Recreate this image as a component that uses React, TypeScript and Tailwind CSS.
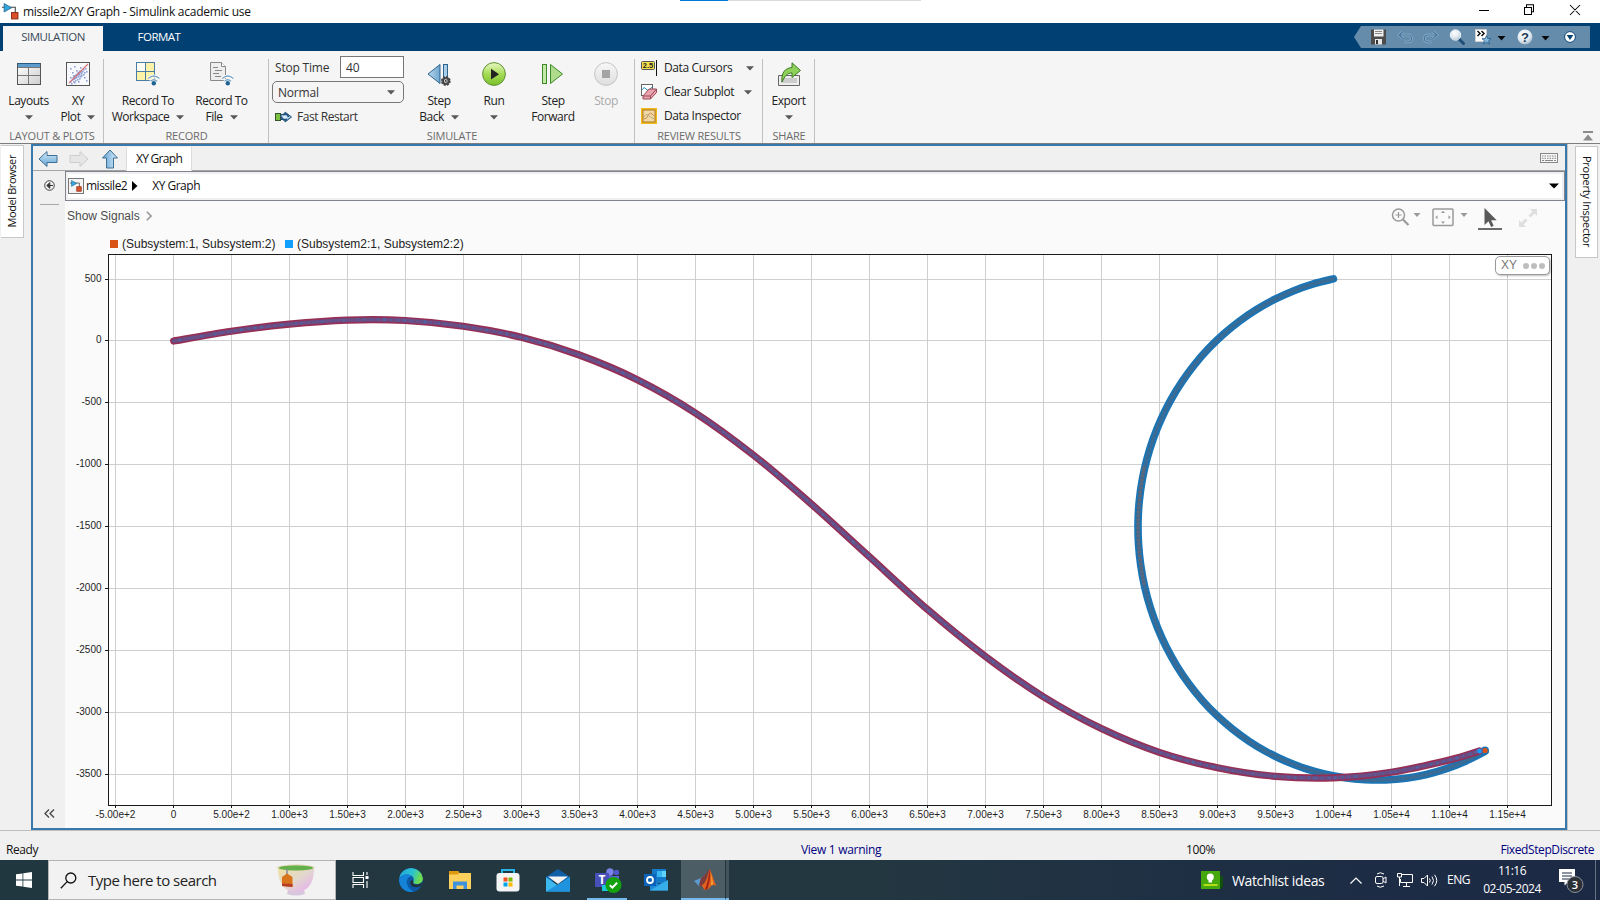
import React from "react";

const SEG = "font-['Open_Sans','Noto_Sans',sans-serif]";

type Pt = [number, number];

const pursuer: Pt[] = [
  [173.7, 341], [231.3, 331.3], [289.3, 324.2], [347.3, 320.1], [405.3, 320.5], [463.3, 326.3], [521.3, 337.3], [579.3, 355],
  [637.3, 379.7], [695.3, 412.9], [753.3, 455], [811.3, 504], [869.3, 556.7], [927.3, 609.3], [985.3, 656.3], [1043.3, 696.7],
  [1101.3, 728.5], [1159.3, 752.3], [1217.3, 767.7], [1275.3, 776.3], [1333.3, 777.8], [1391.3, 772.2], [1449.3, 760], [1479.3, 751],
];

const target: Pt[] = Array.from({ length: 41 }, (_, i) => {
  const deg = -78.8 + (i / 40) * (115.5 + 78.8);
  const t = (deg * Math.PI) / 180;
  const bump = deg > 90 ? -6.5 * Math.sin(2 * t) ** 2 : deg > 0 ? 1.8 * Math.sin(2 * t) : 0;
  return [1380.5 - 242.5 * Math.cos(t), 527 + 253 * Math.sin(t) + bump];
});

function smooth(p: Pt[]) {
  let d = `M${p[0][0].toFixed(2)} ${p[0][1].toFixed(2)}`;
  for (let i = 0; i < p.length - 1; i++) {
    const a = p[Math.max(0, i - 1)], b = p[i], c = p[i + 1], e = p[Math.min(p.length - 1, i + 2)];
    d += `C${(b[0] + (c[0] - a[0]) / 6).toFixed(2)} ${(b[1] + (c[1] - a[1]) / 6).toFixed(2)} ${(c[0] - (e[0] - b[0]) / 6).toFixed(2)} ${(c[1] - (e[1] - b[1]) / 6).toFixed(2)} ${c[0].toFixed(2)} ${c[1].toFixed(2)}`;
  }
  return d;
}

const xLabels = ["-5.00e+2", "0", "5.00e+2", "1.00e+3", "1.50e+3", "2.00e+3", "2.50e+3", "3.00e+3", "3.50e+3", "4.00e+3", "4.50e+3", "5.00e+3", "5.50e+3", "6.00e+3", "6.50e+3", "7.00e+3", "7.50e+3", "8.00e+3", "8.50e+3", "9.00e+3", "9.50e+3", "1.00e+4", "1.05e+4", "1.10e+4", "1.15e+4"];
const yTicks: [string, number][] = [["500", 279], ["0", 340], ["-500", 402], ["-1000", 464], ["-1500", 526], ["-2000", 588], ["-2500", 650], ["-3000", 712], ["-3500", 774]];

function Chart() {
  const a = smooth(pursuer);
  const b = smooth(target);
  return (
    <svg width="1500" height="575" viewBox="65 253 1500 575" className="block" fontFamily="'Liberation Sans', sans-serif" fontSize="10">
      <rect x="108" y="254" width="1444" height="552" fill="#fff" />
      {xLabels.map((l, i) => (
        <g key={l}>
          <rect x={115 + 58 * i} y="255" width="1" height="550" fill="#cfcfcf" />
          <rect x={115 + 58 * i} y="806" width="1" height="2" fill="#1a1a1a" />
          <text x={115.5 + 58 * i} y="818" textAnchor="middle" fill="#1f1f1f">{l}</text>
        </g>
      ))}
      {yTicks.map(([l, y]) => (
        <g key={l}>
          <rect x="109" y={y} width="1442" height="1" fill="#cfcfcf" />
          <rect x="105" y={y} width="3" height="1" fill="#1a1a1a" />
          <text x="101.5" y={y + 3} textAnchor="end" fill="#1f1f1f">{l}</text>
        </g>
      ))}
      <rect x="108.5" y="254.5" width="1443" height="551" fill="none" stroke="#1a1a1a" />
      <g fill="none" strokeLinecap="round" strokeLinejoin="round">
        <path d={b} stroke="#1b74b4" strokeWidth="7.6" />
        <path d={b} stroke="#3d6b92" strokeWidth="3.4" />
        <path d="M1144 467C1136 508 1136 545 1144 584" stroke="#626776" strokeWidth="3.2" />
        <path d={b} stroke="#2f6c9f" strokeWidth="3.6" strokeDasharray="1 3" strokeLinecap="butt" />
        <path d={a} stroke="#962f55" strokeWidth="7.2" />
        <path d={a} stroke="#665089" strokeWidth="3.8" />
        <path d={a} stroke="#4f64a4" strokeWidth="2.4" strokeDasharray="1.5 4 3 5 1 6" strokeLinecap="butt" />
        <path d={a} stroke="#7b4473" strokeWidth="4.4" strokeDasharray="1 7 1 4" strokeLinecap="butt" />
      </g>
      <circle cx="1485" cy="750.5" r="3.3" fill="#d95319" stroke="#1b74b4" strokeWidth="1.4" />
      <circle cx="1479.5" cy="751" r="2.8" fill="#139fff" stroke="#7a4c86" strokeWidth="1" />
    </svg>
  );
}

function Caret({ className = "", color = "#595959" }: { className?: string; color?: string }) {
  return (
    <svg width="8" height="5" viewBox="0 0 8 5" className={`shrink-0 ${className}`}>
      <path d="M0 .3h8L4 4.6z" fill={color} />
    </svg>
  );
}

function ModelIcon({ size }: { size: number }) {
  return (
    <svg width={size} height={size} viewBox="0 0 16 16" className="shrink-0">
      <path d="M0 4h12.500v6" fill="none" stroke="#444" strokeWidth="1" />
      <path d="M2 .5v8l7-4z" fill="#35a7dc" stroke="#1c5f86" strokeWidth=".7" />
      <rect x="9" y="9" width="6" height="6" fill="#d9502a" stroke="#8a2a10" strokeWidth=".9" />
    </svg>
  );
}

function Wifi() {
  return (
    <g>
      <path d="M12 16.5q6-5 11.500 0M14.500 19.300q3.300-3 6.600 0" fill="none" stroke="#fff" strokeWidth="3" />
      <path d="M12.200 16.500q5.600-5 11.200 0M14.500 19.300q3.300-3 6.600 0" fill="none" stroke="#7ba4c4" strokeWidth="1.300" />
      <circle cx="17.800" cy="21.300" r="2.200" fill="#1f6395" />
    </g>
  );
}

const icons = {
  layouts: (
    <svg width="24" height="24" viewBox="0 0 24 24">
      <defs><linearGradient id="lg1" x2="1" y2="1"><stop offset="0" stopColor="#fff" /><stop offset="1" stopColor="#cfcfcf" /></linearGradient></defs>
      <rect x=".5" y="1.500" width="23" height="21" fill="url(#lg1)" stroke="#555" />
      <rect x="1" y="2" width="22" height="3" fill="#5c9ccc" /><rect x=".5" y="1" width="23" height="1" fill="#275a82" />
      <path d="M1 5.500h22M1 13.500h22M11.500 5v17" stroke="#777" fill="none" />
    </svg>
  ),
  xy: (
    <svg width="24" height="24" viewBox="0 0 24 24">
      <rect x=".5" y=".5" width="23" height="23" fill="#f8f9fc" stroke="#555" />
      <g fill="#8fa3d6">
        {[[4, 19], [6, 17], [5, 21], [8, 16], [7, 19], [9, 18], [10, 15], [9, 13], [11, 17], [12, 14], [11, 12], [13, 12], [14, 14], [12, 10], [15, 11], [14, 9], [16, 9], [17, 7], [15, 13], [18, 10], [17, 12], [19, 6], [7, 13], [4, 15], [12, 19], [6, 10], [10, 8], [18, 15], [4, 6], [8, 4], [14, 5], [20, 18], [20, 9], [13, 16], [8, 20]].map(([x, y], i) => (
          <rect key={i} x={x} y={y} width="1.600" height="1.600" />
        ))}
      </g>
      <path d="M7 17l8-8" stroke="#6f88cc" strokeWidth="3" opacity=".6" />
      <path d="M3 21L22 2" stroke="#d9757a" strokeWidth="1.300" />
    </svg>
  ),
  recWs: (
    <svg width="24" height="24" viewBox="0 0 24 24">
      <rect x=".5" y=".5" width="18" height="18" fill="#fdf3a8" stroke="#4a7da6" />
      <rect x="1" y="1" width="8" height="8" fill="#fffef2" />
      <path d="M9.500 1v17M1 9.500h17" stroke="#4a7da6" />
      <Wifi />
    </svg>
  ),
  recFile: (
    <svg width="24" height="24" viewBox="0 0 24 24">
      <path d="M.5.500h11l4 4v14H.500z" fill="#eee" stroke="#888" />
      <path d="M11.500.500v4h4" fill="#fff" stroke="#888" />
      <path d="M3 5.500h5M5 8.500h7M3 11.500h6M5 14.500h6" stroke="#888" />
      <Wifi />
    </svg>
  ),
  stepBack: (
    <svg width="24" height="24" viewBox="0 0 24 24">
      <defs><linearGradient id="lb" x2="1"><stop offset="0" stopColor="#b9d8ee" /><stop offset="1" stopColor="#6fa6cd" /></linearGradient></defs>
      <path d="M13 2.500v19L1 12z" fill="url(#lb)" stroke="#2d6490" />
      <rect x="16.500" y="2.500" width="4" height="19" fill="#a9cde6" stroke="#2d6490" />
      <circle cx="18.800" cy="19" r="4.100" fill="#555" stroke="#444" strokeWidth="1.600" strokeDasharray="2 1.200" />
      <circle cx="18.800" cy="19" r="2.400" fill="#ddd" stroke="#333" /><circle cx="18.800" cy="19" r=".9" fill="#333" />
    </svg>
  ),
  run: (
    <svg width="24" height="24" viewBox="0 0 24 24">
      <defs><linearGradient id="gr" x2="0" y2="1"><stop offset="0" stopColor="#e8f7c4" /><stop offset=".5" stopColor="#a5dc55" /><stop offset="1" stopColor="#78c02c" /></linearGradient></defs>
      <circle cx="12" cy="12" r="11.400" fill="url(#gr)" stroke="#5f8f35" />
      <path d="M9 6.800v10.700l8-5.300z" fill="#222" />
    </svg>
  ),
  stepFwd: (
    <svg width="24" height="24" viewBox="0 0 24 24">
      <rect x="1.500" y="2.500" width="4" height="19" fill="#c3e8a8" stroke="#3e8a2a" />
      <path d="M9.500 2.500v19l12-9.500z" fill="#aedc8b" stroke="#3e8a2a" />
    </svg>
  ),
  stop: (
    <svg width="24" height="24" viewBox="0 0 24 24">
      <defs><linearGradient id="gs" x2="0" y2="1"><stop offset="0" stopColor="#f7f7f7" /><stop offset="1" stopColor="#dedede" /></linearGradient></defs>
      <circle cx="12" cy="12" r="11.400" fill="url(#gs)" stroke="#c4c4c4" />
      <rect x="8" y="8" width="8" height="8" fill="#a3a3a3" />
    </svg>
  ),
  exp: (
    <svg width="24" height="24" viewBox="0 0 24 24">
      <path d="M1.500 13.500h21v10h-21z" fill="#eee" stroke="#666" /><path d="M4 16h16v5H4z" fill="#ccc" />
      <path d="M5 20C4 11 8 6 15 5.500V.8l8.500 7.700L15 15.500v-4.500c-5 0-7 3-10 9z" fill="#8fd05a" stroke="#3b7a22" />
    </svg>
  ),
};

function Btn({ icon, l1, l2, caret, below, w, off }: { icon: React.ReactNode; l1: string; l2?: string; caret?: boolean; below?: boolean; w: string; off?: boolean }) {
  return (
    <div className={`flex flex-col items-center shrink-0 pt-[11px] ${w} ${off ? "text-[#ababab]" : "text-[#222]"}`}>
      {icon}
      <div className="mt-[7px] h-4 leading-4 whitespace-nowrap">{l1}</div>
      <div className="h-4 leading-4 whitespace-nowrap flex items-center justify-center gap-[7px]">
        {l2 && <span>{l2}</span>}
        {(caret || below) && <Caret />}
      </div>
    </div>
  );
}

function Section({ title, w, children }: { title: string; w: string; children: React.ReactNode }) {
  return (
    <div className={`flex flex-col shrink-0 relative h-[92px] ${w}`}>
      <div className="flex h-[76px]">{children}</div>
      <div className="h-4 leading-[17px] text-center text-[11px] tracking-[-0.2px] text-[#6b6b6b] whitespace-nowrap">{title}</div>
      <div className="absolute right-0 top-2 bottom-0 w-px bg-[#c0c0c0]" />
    </div>
  );
}

function NavArrow({ kind }: { kind: "left" | "right" | "up" }) {
  const off = kind === "right";
  const rot = kind === "up" ? "rotate-90" : kind === "right" ? "rotate-180" : "";
  return (
    <svg width="20" height="18" viewBox="0 0 20 18" className={rot}>
      <defs>
        <linearGradient id="na" x2="0" y2="1"><stop offset="0" stopColor="#d5ebfa" /><stop offset="1" stopColor="#62a3d4" /></linearGradient>
      </defs>
      <path d="M1 9l8-7.500v4h10v7H9v4z" fill={off ? "#e6e6e6" : "url(#na)"} stroke={off ? "#cdcdcd" : "#3f6f92"} />
    </svg>
  );
}

function Toolstrip() {
  return (
    <div className="flex h-[93px] bg-[#f5f5f5] border-b border-[#7d7d7d] text-[12px] tracking-[-0.45px] shrink-0">
      <Section title="LAYOUT & PLOTS" w="w-[104px]">
        <Btn icon={icons.layouts} l1="Layouts" below w="w-[57px]" />
        <Btn icon={icons.xy} l1="XY" l2="Plot" caret w="w-[42px]" />
      </Section>
      <Section title="RECORD" w="w-[165px]">
        <Btn icon={icons.recWs} l1="Record To" l2="Workspace" caret w="w-[88px]" />
        <Btn icon={icons.recFile} l1="Record To" l2="File" caret w="w-[59px]" />
      </Section>
      <Section title="SIMULATE" w="w-[366px]">
        <div className="w-[144px] pl-[3px] pt-[5px] flex flex-col text-[#333]">
          <div className="flex items-center justify-between w-[132px] pl-[3px] tracking-[-0.2px]">
            <span className="mt-[2px]">Stop Time</span>
            <div className="w-16 h-[22px] border border-[#777] bg-white pl-[5px] leading-[21px]">40</div>
          </div>
          <div className="mt-[3px] w-[132px] h-[22px] border border-[#777] rounded-[5px] flex items-center justify-between pl-[5px] pr-2 tracking-[-0.2px]">
            <span className="mt-px">Normal</span>
            <Caret />
          </div>
          <div className="mt-[6px] flex items-center gap-[5px] pl-[3px] h-4">
            <svg width="17" height="14" viewBox="0 0 17 14">
              <rect x=".5" y="3.500" width="5" height="7" fill="#7cc142" stroke="#35562a" />
              <path d="M6 4.500h4V2l6.500 5-6.500 5V9.500H6z" fill="#9cc4e2" stroke="#234f75" />
              <path d="M8 4.500a3.600 3.600 0 0 1 5.500 2.500M12 9.500a3.600 3.600 0 0 1-5.500-2.500" fill="none" stroke="#1d4c76" strokeWidth="1.500" /><path d="M8 7h4" stroke="#fff" strokeWidth="1.200" />
            </svg>
            <span>Fast Restart</span>
          </div>
        </div>
        <Btn icon={icons.stepBack} l1="Step" l2="Back" caret w="w-[52px]" />
        <Btn icon={icons.run} l1="Run" below w="w-[58px]" />
        <Btn icon={icons.stepFwd} l1="Step" l2="Forward" w="w-[60px]" />
        <Btn icon={icons.stop} l1="Stop" off w="w-[46px]" />
      </Section>
      <Section title="REVIEW RESULTS" w="w-[128px]">
        <div className="pl-[6px] pt-[5px] w-full text-[#222] tracking-[-0.38px]">
          <div className="h-6 flex items-center">
            <svg width="16" height="16" viewBox="0 0 16 16" className="mr-[7px]">
              <rect x=".5" y="1.500" width="13" height="8" rx="1" fill="#f3e04a" stroke="#555" />
              <text x="7" y="8.300" textAnchor="middle" fontSize="7.500" fontWeight="700" fontFamily="'Liberation Sans', sans-serif" fill="#222" letterSpacing="0">2.5</text>
              <rect x="15" y="0" width="1" height="16" fill="#111" />
            </svg>
            <span>Data Cursors</span>
            <Caret className="ml-auto mr-[9px]" />
          </div>
          <div className="h-6 flex items-center">
            <svg width="16" height="16" viewBox="0 0 16 16" className="mr-[7px]">
              <rect x=".5" y=".5" width="11" height="11" fill="#fff" stroke="#666" />
              <path d="M1 6q2-4 4-1t6-2" fill="none" stroke="#2e95d3" />
              <path d="M2 12l6-7h7.500v3.500l-6 6.500H2z" fill="#e8a5b0" stroke="#9b4a58" /><path d="M2 12h7.500l6-7M9.500 12v3" fill="none" stroke="#9b4a58" />
            </svg>
            <span>Clear Subplot</span>
            <Caret className="ml-auto mr-[11px]" />
          </div>
          <div className="h-6 flex items-center">
            <svg width="16" height="16" viewBox="0 0 16 16" className="mr-[7px]">
              <rect x="1" y="1" width="14" height="14" fill="#f0d9a4" stroke="#f2b91c" strokeWidth="2" />
              <rect x="2" y="2" width="12" height="12" fill="none" stroke="#a8772a" />
              <path d="M3 11q3 0 4.500-4t5.500 1" fill="none" stroke="#d08a55" /><path d="M3 9q2-4 4-2t6 4" fill="none" stroke="#b9ab88" />
            </svg>
            <span>Data Inspector</span>
          </div>
        </div>
      </Section>
      <Section title="SHARE" w="w-[52px]">
        <Btn icon={icons.exp} l1="Export" below w="w-[51px]" />
      </Section>
      <div className="ml-auto flex items-end pr-[7px] pb-[2px]">
        <svg width="10" height="10" viewBox="0 0 10 10"><path d="M0 0h10v2H0zM0 9.500h10L5 3.500z" fill="#8c8c8c" /></svg>
      </div>
    </div>
  );
}

function TabBar() {
  return (
    <div className="flex h-7 bg-[#004073] shrink-0 items-end text-[11.5px] tracking-[-0.5px]">
      <div className="ml-[3px] w-[100px] h-[25px] bg-[#f5f5f5] text-[#3a4a5a] flex items-center justify-center pb-[3px]">SIMULATION</div>
      <div className="w-[112px] h-[25px] text-white flex items-center justify-center pb-[3px]">FORMAT</div>
      <div className="ml-auto mr-[10px] mb-[3px]">
        <svg width="236" height="22" viewBox="1354 26 236 22" className="block">
          <defs><radialGradient id="ball" cx=".4" cy=".3" r=".8"><stop offset="0" stopColor="#fff" /><stop offset=".6" stopColor="#dde7ef" /><stop offset="1" stopColor="#8fa9bd" /></radialGradient></defs>
          <path d="M1354 37l7-11h229v22h-229z" fill="#668cac" />
          <path d="M1371 29.500h15v15h-15z" fill="#4c4c4c" /><path d="M1374 29.500h9.500v7H1374z" fill="#f1f1f1" /><path d="M1375 31.500h7M1375 33.500h7" stroke="#888" /><path d="M1375 39h7v5.500h-7z" fill="#e8e8e8" /><path d="M1376 40h2v4h-2z" fill="#333" />
          <g fill="none" stroke="#8fb2cf" strokeWidth="2.400"><path d="M1400 35h8q3.500 0 3.500 3.500T1408 42h-4M1403 31.500l-4 3.500 4 3.500" /><path d="M1436 35h-8q-3.500 0-3.500 3.500T1428 42h4M1433 31.500l4 3.500-4 3.500" /></g>
          <g fill="none" stroke="#48749a" strokeWidth="1.200"><path d="M1400 35h8q3.500 0 3.500 3.500T1408 42h-4M1403 31.500l-4 3.500 4 3.500" /><path d="M1436 35h-8q-3.500 0-3.500 3.500T1428 42h4M1433 31.500l4 3.500-4 3.500" /></g>
          <path d="M1458.500 38.500l5 5" stroke="#1f4c78" strokeWidth="3" strokeLinecap="round" /><circle cx="1455.500" cy="35" r="5.200" fill="url(#ball)" stroke="#e8f1f8" />
          <path d="M1475.500 29.500h11v12h-11z" fill="#fff" stroke="#d0d0d0" /><path d="M1477.500 31l2.500 2.500-2.500 2.500M1481.500 31l2.500 2.500-2.500 2.500" fill="none" stroke="#111" strokeWidth="1.500" />
          <path d="M1486.500 35.500l1.300 3 3.200.2-2.400 2.100.8 3.200-2.900-1.800-2.900 1.800.8-3.200-2.400-2.100 3.200-.2z" fill="#84b8dc" stroke="#285a85" strokeWidth=".8" />
          <path d="M1497.500 36h8l-4 4.500zM1541.500 36h8l-4 4.500z" fill="#0a0a0a" />
          <circle cx="1525" cy="37" r="7.500" fill="url(#ball)" />
          <text x="1525" y="41.800" textAnchor="middle" fontSize="13" fontWeight="700" fontFamily="'Liberation Sans', sans-serif" fill="#1d3b57" letterSpacing="0">?</text>
          <circle cx="1570" cy="37" r="5.400" fill="#fff" stroke="#0f4a7e" strokeWidth="1" /><path d="M1566.700 35h6.600l-3.300 5z" fill="#004073" />
        </svg>
      </div>
    </div>
  );
}

function Taskbar() {
  return (
    <div className="flex h-10 shrink-0 bg-[linear-gradient(90deg,#21373f_0%,#233741_55%,#1e2f44_75%,#1c2945_100%)] text-white">
      <div className="w-12 flex items-center justify-center">
        <svg width="16" height="16" viewBox="0 0 16 16"><path d="M0 2.300L6.500 1.400v6.200H0zM7.300 1.300L16 0v7.600H7.300zM0 8.400h6.500v6.200L0 13.700zM7.300 8.400H16V16l-8.700-1.200z" fill="#fff" /></svg>
      </div>
      <div className="w-[288px] bg-[#f2f2f2] border border-[#b5b5b5] flex items-center text-[#222] pl-[11px] pr-[20px]">
        <svg width="17" height="17" viewBox="0 0 17 17"><circle cx="10.800" cy="6" r="5" fill="none" stroke="#111" strokeWidth="1.300" /><path d="M7.200 9.600L.8 16.200" stroke="#111" strokeWidth="1.300" /></svg>
        <span className="ml-[11px] text-[15px] tracking-[-0.5px] whitespace-nowrap">Type here to search</span>
        <svg width="38" height="32" viewBox="0 0 38 32" className="ml-auto">
          <defs><linearGradient id="cup" x2="1" y2="1"><stop offset="0" stopColor="#f0e0a0" /><stop offset=".5" stopColor="#e2d8cc" /><stop offset="1" stopColor="#e6a8f6" /></linearGradient></defs>
          <path d="M11 26h16l1 4q-9 3-18 0z" fill="#d8c6dc" />
          <path d="M.5 3L2 14q4 14 17 14t17-14l1.500-11z" fill="url(#cup)" /><ellipse cx="19" cy="3.600" rx="18.500" ry="3" fill="#d8d2a8" /><ellipse cx="19" cy="4" rx="17" ry="2.400" fill="#62b04a" />
          <path d="M10 5v6" stroke="#8a8a9a" strokeWidth="1.500" /><path d="M5 13l5-3.500 5.500 3.500v10L5 22z" fill="#d8741c" /><path d="M5 19.500l10.500.500V23L5 22z" fill="#b53c26" />
        </svg>
      </div>
      <div className="w-[48px] flex items-center justify-center">
        <svg width="17" height="16" viewBox="0 0 17 16"><path d="M1 0v3.500h10.500V0M1 16v-3.500h10.500V16M1 5.500h10.500v5H1z" fill="none" stroke="#fff" strokeWidth="1.100" /><path d="M15 0v3M15 9v7" stroke="#fff" strokeWidth="1.100" /><rect x="13.500" y="4" width="3" height="3" fill="#fff" /></svg>
      </div>
      <div className="w-[54px] flex items-center justify-center">
        <svg width="24" height="24" viewBox="0 0 24 24">
          <defs>
            <linearGradient id="e1" x1="0" y1="0" x2="1" y2=".3"><stop offset="0" stopColor="#1fa0dc" /><stop offset=".6" stopColor="#2cc3cf" /><stop offset="1" stopColor="#6fdc4c" /></linearGradient>
            <clipPath id="ec"><circle cx="12" cy="12" r="12" /></clipPath>
          </defs>
          <g clipPath="url(#ec)">
            <rect width="24" height="24" fill="#0c59a8" />
            <path d="M0 11C1 4 6 0 12 0c7 0 12 5 12 10 0 4-3 6-6.500 6-3 0-4-1.200-3-2.500C16 9 12 6.500 8 6.500 4 6.500 1 8.500 0 11z" fill="url(#e1)" />
            <path d="M0 12c1-3.500 4-5.500 8-5.500 2 0 4 .7 5.300 1.800C9 8.500 7 12 8 16c.8 3.500 4 6.500 7 7.500C7 26 0 20 0 12z" fill="#1483d8" />
            <path d="M14.300 14c-.8 1.500.5 2.500 3.200 2.500 2 0 3.800-.6 5-1.500l1.500-.500v4l-3 0c-2 .8-4 1-5.500.5-4-.6-5-3.500-3.800-6 .8-1.500 2.800-1 2.600 1z" fill="#22343d" />
          </g>
        </svg>
      </div>
      <div className="w-[44px] flex items-center justify-center">
        <svg width="22" height="19" viewBox="0 0 22 19"><path d="M0 0h9l1.500 2H22v16H0z" fill="#ffd15c" /><path d="M0 0h9l1.500 2-1.500 1.500H0z" fill="#e09a10" /><path d="M4 10.500h14V18h-3.500v-3.500h-7V18H4z" fill="#3d91dd" /></svg>
      </div>
      <div className="w-[52px] flex items-center justify-center">
        <svg width="24" height="24" viewBox="0 0 24 24"><path d="M6 6V2h12v4" fill="none" stroke="#28b4e8" strokeWidth="2" /><rect x=".5" y="5" width="23" height="18.500" rx="3" fill="#f5f5f5" /><path d="M7.500 9.500h4v4h-4z" fill="#f25022" /><path d="M12.500 9.500h4v4h-4z" fill="#7fba00" /><path d="M7.500 14.500h4v4h-4z" fill="#00a4ef" /><path d="M12.500 14.500h4v4h-4z" fill="#ffb900" /></svg>
      </div>
      <div className="w-[47px] flex items-center justify-center">
        <svg width="24" height="23" viewBox="0 0 24 23"><path d="M0 8l12-8 12 8v4H0z" fill="#0f5ea8" /><path d="M2 7.500h20L12 15z" fill="#f3f3f3" /><path d="M0 8l12 8.500L24 8v14.500H0z" fill="#3bb9ee" /><path d="M0 22.500L24 8v14.500z" fill="#1f93dd" /></svg>
      </div>
      <div className="ml-[6px] w-[40px] flex items-center justify-center border-b-2 border-[#76b9ed]">
        <svg width="27" height="26" viewBox="0 0 27 26" className="mt-[4px] ml-[2px]"><circle cx="15" cy="4" r="3.700" fill="#7b83eb" /><circle cx="21.500" cy="4.500" r="2.700" fill="#5059c9" /><path d="M10 8h14v8q0 5-7 5t-7-5z" fill="#5a62d0" /><rect x="0" y="5" width="14" height="14" rx="1" fill="#4650b8" /><text x="7" y="16" textAnchor="middle" fill="#fff" fontSize="12" fontWeight="700" fontFamily="'Open Sans', sans-serif">T</text><rect x="7" y="17" width="6" height="6" fill="#1ac8d8" /><circle cx="18.500" cy="17" r="8" fill="#13a10e" /><path d="M14.800 17.200l2.600 2.500 4.700-5" stroke="#fff" strokeWidth="2" fill="none" /></svg>
      </div>
      <div className="w-[54px] pl-[4px] flex items-center justify-center">
        <svg width="24" height="22" viewBox="0 0 24 22"><path d="M8 0h14v14H8z" fill="#1579c9" /><path d="M13 2h9v6h-9z" fill="#38b6f0" /><path d="M18 2h4v6h-4z" fill="#5fd3fb" /><path d="M6 11l9 4 9-4v10.500H6z" fill="#1c8ad9" /><path d="M6 21.500L24 11v10.500z" fill="#37aee8" /><rect x="0" y="5" width="12" height="12" fill="#0a63b8" /><circle cx="6" cy="11" r="3" fill="none" stroke="#fff" strokeWidth="1.800" /></svg>
      </div>
      <div className="w-[44px] bg-[#4d5d65] border-b-2 border-[#76b9ed] flex items-center justify-center">
        <svg width="23" height="21" viewBox="0 0 23 21" className="ml-[4px]"><path d="M0 12l7-3 4-3-2 8-4 3z" fill="#5b9bd0" /><path d="M7 9q5-3 8-9l-3 14-4 4-3-2z" fill="#7f3a3a" /><path d="M15.500 0c2 3 4 11 7 17-3-2-5-1-8 3l-4 1-3-5c4 0 6-9 8-16z" fill="#e06420" /><path d="M15.500 0c1.500 5 .5 13-2 20l-3 .8c3-5 4-13 5-20.800z" fill="#a82414" /><path d="M16 3c1.500 5 2 9 1 13l2-.8c-.5-4-1.500-9-3-12.200z" fill="#f9b23a" /></svg>
      </div>
      <div className="w-1 bg-[#44545d] border-b-2 border-[#76b9ed] border-l border-l-[#24343c]" />
      <div className={`ml-auto flex items-center whitespace-nowrap ${SEG}`}>
        <svg width="22" height="18" viewBox="0 0 22 18"><path d="M14 5h8v11l-3 2h-5z" fill="#124e0c" /><rect width="19" height="18" fill="#45a80c" /><circle cx="9.300" cy="6" r="3.500" fill="#fff" /><path d="M7.500 8h3.600v3.500H7.500z" fill="#fff" /><path d="M2.500 14h14" stroke="#d8f01c" strokeWidth="1.500" /></svg>
        <span className="ml-[9px] text-[14px] tracking-[-0.36px] w-[93px]">Watchlist ideas</span>
        <svg width="12" height="7" viewBox="0 0 12 7" className="ml-[25px]"><path d="M.5 6.500L6 1l5.500 5.500" fill="none" stroke="#fff" strokeWidth="1.200" /></svg>
        <svg width="12" height="16" viewBox="0 0 12 16" className="ml-[13px]"><g fill="none" stroke="#fff"><rect x=".5" y="4.500" width="7.500" height="7" rx="1.500" /><path d="M8 7l3-2v6L8 9" /><path d="M2 2q3-2.500 7 0M2 14q3 2.500 7 0" /></g></svg>
        <svg width="16" height="14" viewBox="0 0 16 14" className="ml-[10px]"><g fill="none" stroke="#fff"><path d="M5 1.500h10.500v8h-12V6M9.500 10v3M6 13.500h7" /><path d="M.5.500h4v3.500h-4zM2.500 4v9" /></g></svg>
        <svg width="17" height="13" viewBox="0 0 17 13" className="ml-[8px]"><g fill="none" stroke="#fff"><path d="M.5 4.500H3L6.500 1v11L3 8.500H.500z" /><path d="M8.500 4.500q1.500 2 0 4M11 2.500q3 4 0 8M13.500.800q4.500 5.700 0 11.400" /></g></svg>
        <span className="ml-[9px] text-[12px] tracking-[-0.45px] w-[24px]">ENG</span>
        <div className="ml-[11px] w-[60px] text-center text-[12px] tracking-[-0.5px] leading-[18px] flex flex-col items-center"><span>11:16</span><span>02-05-2024</span></div>
        <svg width="26" height="26" viewBox="0 0 26 26" className="ml-[17px] mt-[4px]"><path d="M0 0h16v13H9l-3.500 3.500V13H0z" fill="#fff" /><path d="M3 4h10M3 7h10M3 10h7" stroke="#1d2a44" /><circle cx="16" cy="15.500" r="8" fill="#2b2f36" stroke="#8c929b" /><text x="16" y="19.500" textAnchor="middle" fontSize="11" fill="#fff" fontWeight="600" letterSpacing="0">3</text></svg>
        <div className="w-px h-10 bg-[#6b7485] ml-[10px] mr-[4px]" />
      </div>
    </div>
  );
}

export default function App() {
  return (
    <div className={`w-[1600px] h-[900px] overflow-hidden flex flex-col bg-[#f0f0f0] text-[#111] text-[12px] ${SEG}`}>
      <div className="relative flex h-[23px] bg-white shrink-0 items-center pl-[2px]">
        <ModelIcon size={17} />
        <span className="ml-[4px] mt-px tracking-[-0.26px] whitespace-nowrap">missile2/XY Graph - Simulink academic use</span>
        <div className="ml-auto mr-[19px] flex items-center mt-[-3px]">
          <svg width="102" height="12" viewBox="0 0 102 12"><path d="M0 6.500h10M45.500 3.500h7v7h-7zM47.500 3V.800h7v7H53M91 1l10 10M101 1L91 11" fill="none" stroke="#000" strokeWidth="1.050" /></svg>
        </div>
        <div className="absolute left-[680px] top-0 flex"><div className="w-12 h-px bg-[#0078d7]" /><div className="w-[193px] h-px bg-[#dcdcdc]" /></div>
      </div>
      <TabBar />
      <Toolstrip />
      <div className="flex h-[686px] shrink-0">
        <div className="w-[31px] pl-px pt-px">
          <div className="w-[23px] h-[93px] bg-white border border-[#c8c8c8] border-l-0 flex items-center justify-center">
            <span className="[writing-mode:vertical-rl] rotate-180 text-[11px] tracking-[-0.4px] whitespace-nowrap ml-px">Model Browser</span>
          </div>
        </div>
        <div className="w-[1536px] flex flex-col border-2 border-[#3878ab]">
          <div className="flex h-[25px] items-center border-b border-[#a6a6a6] shrink-0 pt-px">
            <div className="ml-[5px] flex"><NavArrow kind="left" /></div>
            <div className="ml-[11px] flex"><NavArrow kind="right" /></div>
            <div className="ml-[11px] flex"><NavArrow kind="up" /></div>
            <div className="ml-[6px] w-[66px] h-6 bg-white border-x border-[#dcdcdc] flex items-center justify-center tracking-[-0.7px] whitespace-nowrap pt-px">XY Graph</div>
            <svg width="18" height="11" viewBox="0 0 18 11" className="ml-auto mr-[7px]"><rect x=".5" y=".5" width="17" height="9" fill="#f6f6f6" stroke="#888" /><path d="M2 3h14M2 5.300h14" stroke="#888" strokeDasharray="1.500 1" /><path d="M2 7.500h2M5 7.500h8M14 7.500h2" stroke="#888" /></svg>
          </div>
          <div className="flex grow">
            <div className="w-8 flex flex-col items-center justify-between pb-[10px] pt-[9px]">
              <div className="flex flex-col items-center">
                <svg width="11" height="11" viewBox="0 0 11 11"><circle cx="5.500" cy="5.500" r="4.800" fill="none" stroke="#444" /><path d="M9 5.500H3M5.800 2.700L2.800 5.500l3 2.800z" fill="#333" stroke="#333" /></svg>
                <div className="w-[19px] h-px bg-[#a8a8a8] mt-[13px]" />
              </div>
              <svg width="11" height="9" viewBox="0 0 11 9"><path d="M5 .5l-4 4 4 4M10 .5l-4 4 4 4" fill="none" stroke="#444" strokeWidth="1.300" /></svg>
            </div>
            <div className="w-[1500px] bg-[#fafafa] flex flex-col">
              <div className="h-[30px] border border-[#80848c] bg-[#f0f0f0] py-[2px] pl-[2px] shrink-0 pr-[2px]">
                <div className="h-full bg-white flex items-center pr-[3px] whitespace-nowrap tracking-[-0.5px]">
                  <div className="w-4 h-4 border border-[#777] bg-[#f4f4f4] flex items-center justify-center"><ModelIcon size={12} /></div>
                  <span className="ml-[2px]">missile2</span>
                  <svg width="6" height="10" viewBox="0 0 6 10" className="ml-[5px]"><path d="M0 0l5.500 5L0 10z" fill="#000" /></svg>
                  <span className="ml-[14px]">XY Graph</span>
                  <svg width="10" height="6" viewBox="0 0 10 6" className="ml-auto"><path d="M0 .5h10l-5 5z" fill="#000" /></svg>
                </div>
              </div>
              <div className="h-[34px] shrink-0 flex pl-[2px] font-['Liberation_Sans',sans-serif] text-[#4c4c4c]">
                <span className="mt-[6px] leading-[18px]">Show Signals</span>
                <svg width="6" height="10" viewBox="0 0 6 10" className="mt-[10px] ml-[6px]"><path d="M.8.800L5 5 .8 9.200" fill="none" stroke="#999" strokeWidth="1.600" /></svg>
                <svg width="147" height="34" viewBox="1390 201 147 34" className="ml-auto mr-[28px]">
                  <g fill="none" stroke="#9a9a9a" strokeWidth="1.500"><circle cx="1398.500" cy="215" r="6" /><path d="M1403 219.500l5.500 5.500" strokeWidth="2.200" /><path d="M1395.500 215h6M1398.500 212v6" strokeWidth="1.200" /><rect x="1433" y="209" width="20" height="16.500" rx="1" /></g>
                  <path d="M1413.500 213h7l-3.500 4zM1460.500 213h7l-3.500 4zM1441 213h4l-2-2.200zM1441 221.500h4l-2 2.200zM1437.500 215.200v4l-2.200-2zM1448.500 215.200v4l2.200-2z" fill="#9a9a9a" />
                  <path d="M1484.500 208v17l4-3.800 2.600 5.800 2.600-1.200-2.600-5.600h5.600z" fill="#595959" /><rect x="1478" y="228" width="24" height="2" fill="#6a6a6a" />
                  <path d="M1530 209h7v7l-2.500-2.500-4 4-2-2 4-4zM1519 227v-7l2.500 2.500 4-4 2 2-4 4 2.500 2.500z" fill="#dedede" />
                </svg>
              </div>
              <div className="h-[18px] shrink-0 flex items-center pl-[45px] font-['Liberation_Sans',sans-serif] text-[#222] whitespace-nowrap">
                <div className="w-2 h-2 bg-[#d95319] mr-[4px]" />
                <span className="w-[154px]">(Subsystem:1, Subsystem:2)</span>
                <div className="w-2 h-2 bg-[#139fff] ml-[9px] mr-[4px]" />
                <span>(Subsystem2:1, Subsystem2:2)</span>
              </div>
              <div className="relative h-[575px]">
                <Chart />
                <div className="absolute left-[1430px] top-[3px] w-[55px] h-[19px] rounded-[5px] border border-[#9a9a9a] bg-white shadow-[1px_1px_2px_rgba(0,0,0,0.25)] flex items-center pl-[5px] gap-[2px] font-['Liberation_Sans',sans-serif] text-[12px] text-[#777]">
                  <span className="mr-[4px] mt-[-2px]">XY</span>
                  <div className="w-[6px] h-[6px] rounded-full bg-[#bdbdbd]" /><div className="w-[6px] h-[6px] rounded-full bg-[#bdbdbd]" /><div className="w-[6px] h-[6px] rounded-full bg-[#bdbdbd]" />
                </div>
              </div>
            </div>
          </div>
        </div>
        <div className="w-[33px] pl-[7px] pt-[2px] border-l border-[#c4c4c4]">
          <div className="w-[23px] h-[112px] bg-white border border-[#c8c8c8] flex items-center justify-center">
            <span className="[writing-mode:vertical-rl] text-[11px] tracking-[-0.25px] whitespace-nowrap">Property Inspector</span>
          </div>
        </div>
      </div>
      <div className="h-[30px] shrink-0 border-t border-[#bdbdbd] flex items-center pt-[9px] pl-[6px] pr-[6px] tracking-[-0.4px] whitespace-nowrap">
        <span className="w-[795px]">Ready</span>
        <span className="w-[385px] text-[#000080] tracking-[-0.3px]">View 1 warning</span>
        <span>100%</span>
        <span className="ml-auto text-[#000080]">FixedStepDiscrete</span>
      </div>
      <Taskbar />
    </div>
  );
}
